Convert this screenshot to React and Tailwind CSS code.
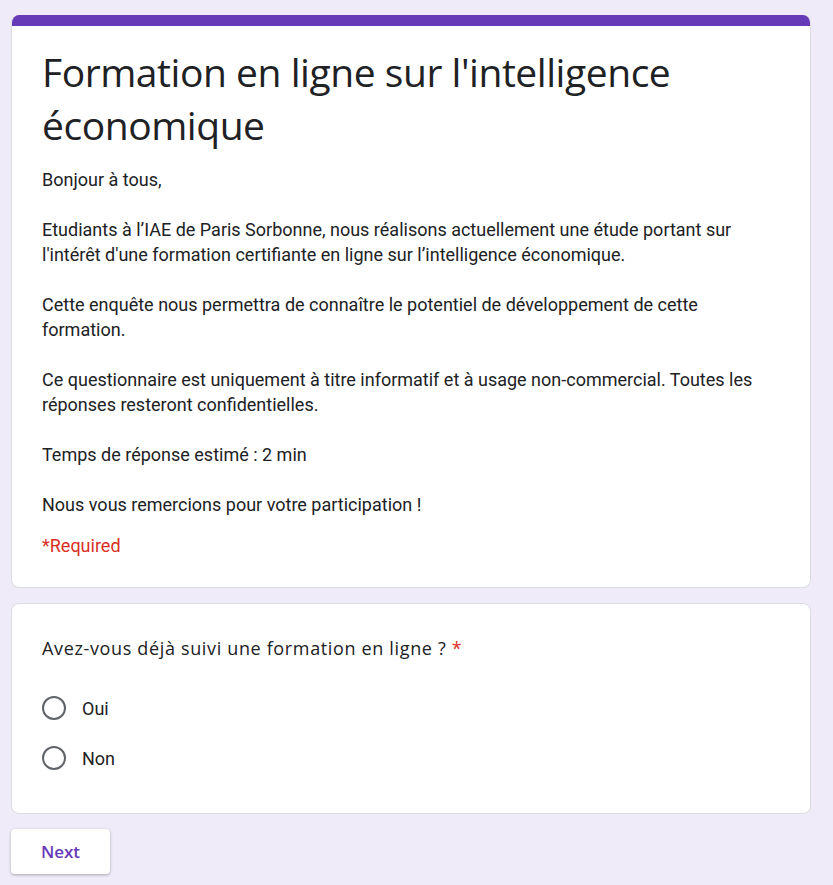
import React from "react";

const paragraphs = [
  ["Bonjour à tous,"],
  [
    "Etudiants à l’IAE de Paris Sorbonne, nous réalisons actuellement une étude portant sur",
    "l'intérêt d'une formation certifiante en ligne sur l’intelligence économique.",
  ],
  [
    "Cette enquête nous permettra de connaître le potentiel de développement de cette",
    "formation.",
  ],
  [
    "Ce questionnaire est uniquement à titre informatif et à usage non-commercial. Toutes les",
    "réponses resteront confidentielles.",
  ],
  ["Temps de réponse estimé : 2 min"],
  ["Nous vous remercions pour votre participation !"],
];

function Radio({ label }) {
  return (
    <label className="flex items-center h-[50px] cursor-pointer">
      <span className="w-6 h-6 rounded-full border-2 border-[#5f6368] box-border" />
      <span className="ml-4 text-[18px] text-[#202124]">{label}</span>
    </label>
  );
}

export default function App() {
  return (
    <div
      className="min-h-[885px] bg-[#efebf8] pt-[15px] pl-[11px] pr-[22px] pb-[10px]"
      style={{ fontFamily: "Roboto, 'Liberation Sans', sans-serif" }}
    >
      <div className="w-[800px]">
        <div className="bg-white rounded-lg border border-[#dadce0] border-t-0 overflow-hidden">
          <div className="h-[11px] bg-[#673ab7]" />
          <div className="px-[30px] pt-[19px] pb-[29px]">
            <h1
              className="text-[39px] leading-[53px] text-[#202124] font-normal"
              style={{ fontFamily: "'Open Sans', sans-serif", letterSpacing: "-0.45px" }}
            >
              Formation en ligne sur l'intelligence
              <br />
              économique
            </h1>
            <div className="mt-[16px] text-[18px] leading-[25px] text-[#202124] flex flex-col gap-[25px]">
              {paragraphs.map((p, i) => (
                <p key={i}>
                  {p.map((line, j) => (
                    <React.Fragment key={j}>
                      {line}
                      {j < p.length - 1 && <br />}
                    </React.Fragment>
                  ))}
                </p>
              ))}
            </div>
            <p className="mt-[16px] text-[18px] leading-[25px] text-[#d93025]">*Required</p>
          </div>
        </div>

        <div className="mt-[15px] bg-white rounded-lg border border-[#dadce0] px-[30px] pt-[32px] pb-[30px]">
          <div
            className="text-[18px] leading-[25px] text-[#202124] tracking-[0.65px]"
            style={{ fontFamily: "'Open Sans', sans-serif" }}
          >
            Avez-vous déjà suivi une formation en ligne ? <span className="text-[#d93025]">*</span>
          </div>
          <div className="mt-[22px] flex flex-col">
            <Radio label="Oui" />
            <Radio label="Non" />
          </div>
        </div>

        <button
          className="mt-[15px] w-[99px] h-[45px] bg-white rounded-[4px] shadow-[0_1px_3px_rgba(0,0,0,0.3)] text-[#673ab7] text-[17px] font-semibold"
          style={{ fontFamily: "'Open Sans', sans-serif" }}
        >
          Next
        </button>
      </div>
    </div>
  );
}
